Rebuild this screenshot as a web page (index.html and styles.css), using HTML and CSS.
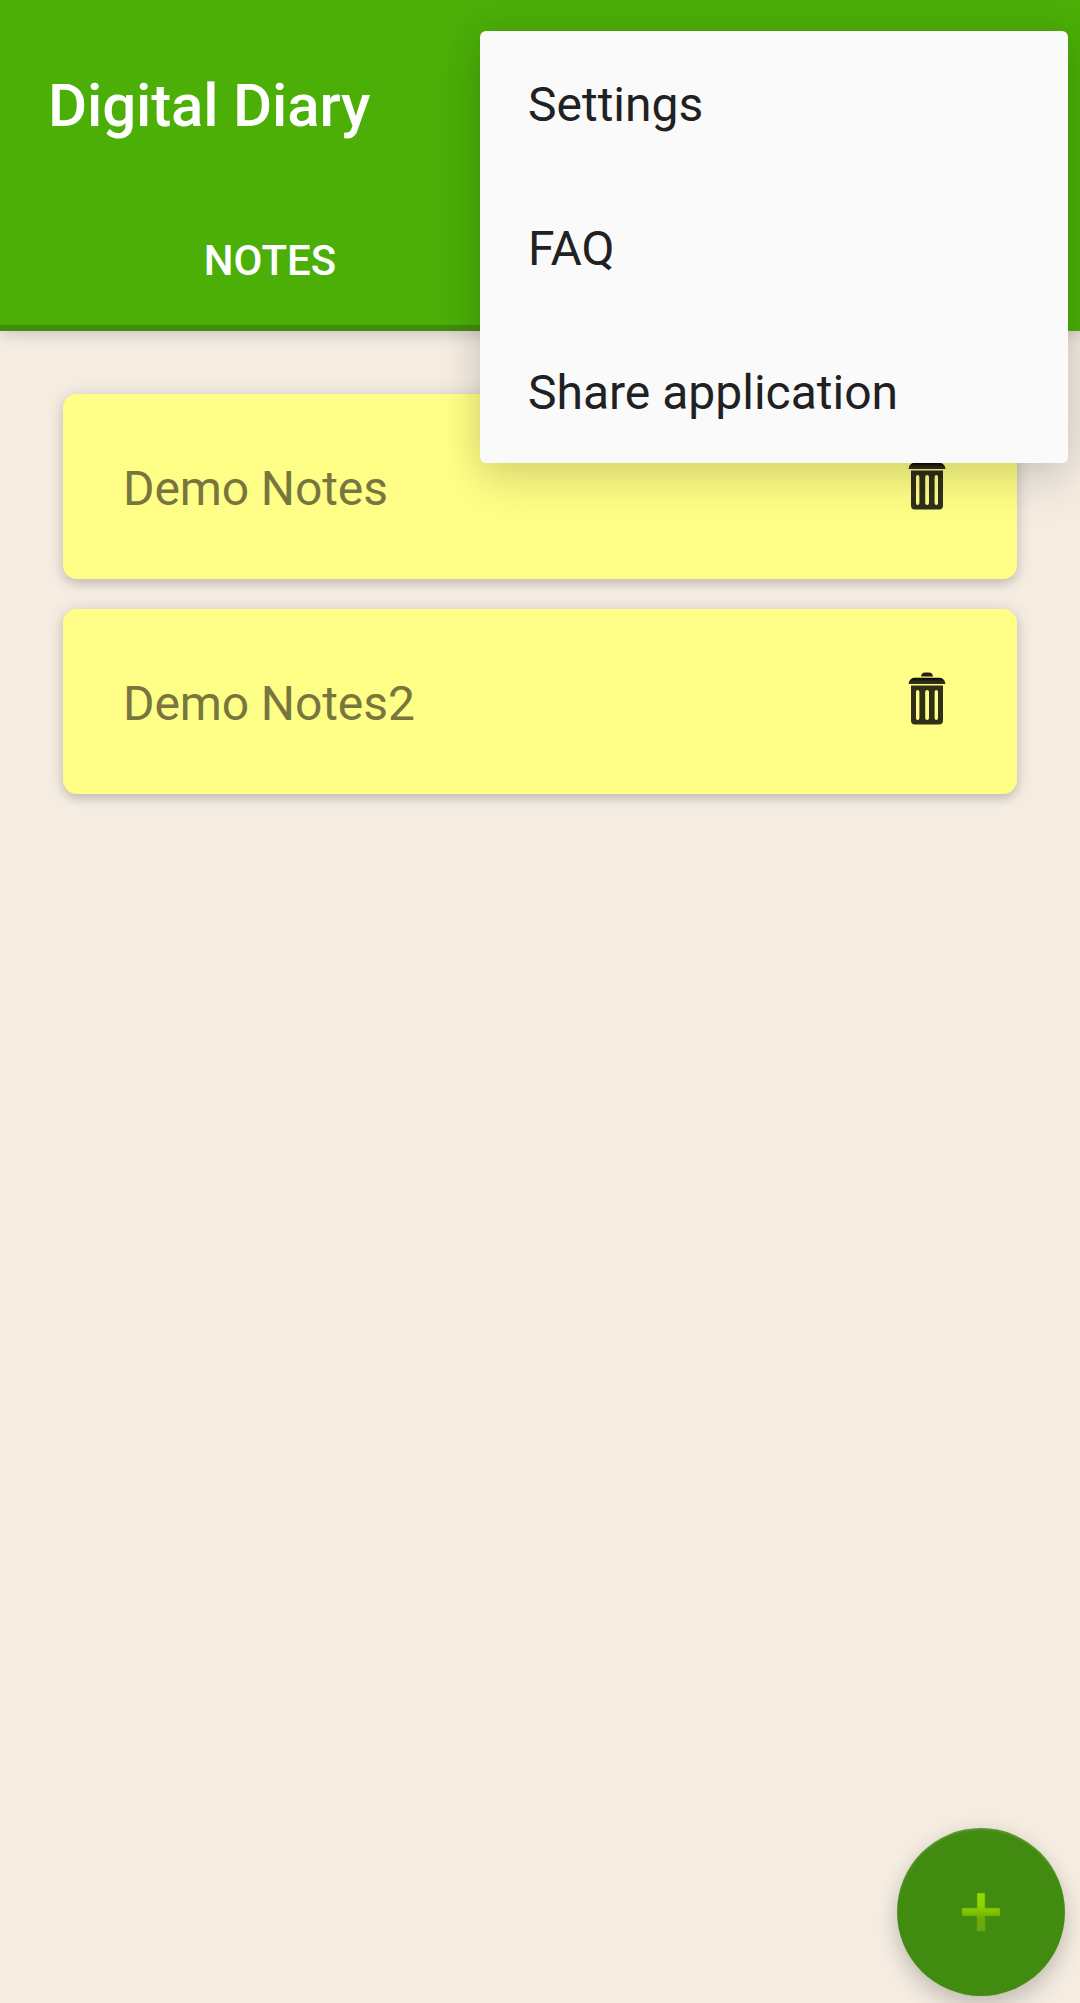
FILE: index.html
```html
<!DOCTYPE html>
<html lang="en">
<head>
    <meta charset="UTF-8">
    <meta name="viewport" content="width=device-width, initial-scale=1.0">
    <title>Digital Diary</title>
    <link rel="stylesheet" href="styles.css">
</head>
<body>
    <div id="app">
        <header>
            <h1>Digital Diary</h1>
            <nav class="tabs">
                <div class="tab active">NOTES</div>
                <div class="tab"></div>
            </nav>
        </header>

        <main class="notes">
            <div class="note">
                <span>Demo Notes</span>
                <svg class="trash" viewBox="0 0 38 54">
                    <use href="#trash-icon"/>
                </svg>
            </div>
            <div class="note">
                <span>Demo Notes2</span>
                <svg class="trash" viewBox="0 0 38 54">
                    <g id="trash-icon">
                        <path fill="#222114" d="M13 4.500q.5-4 4-4h4q3.500 0 4 4z"/>
                        <path fill="url(#lid)" d="M.5 12q.3-3.500 2.500-5 1.500-1.200 4-1.200h24q2.500 0 4 1.200 2.200 1.500 2.500 5z"/>
                        <path fill="#302f1a" fill-rule="evenodd" d="M3 13.500h32V48.500q0 4-4 4H7q-4 0-4-4zM8 20v26q0 2 1.700 2t1.700-2V20q0-2-1.700-2T8 20zm9.200 0v26q0 2 1.900 2t1.900-2V20q0-2-1.900-2t-1.900 2zm9.400 0v26q0 2 1.700 2t1.700-2V20q0-2-1.700-2t-1.700 2z"/>
                    </g>
                    <linearGradient id="lid" x1="0" y1="0" x2="0" y2="1">
                        <stop offset="0" stop-color="#080804"/>
                        <stop offset="0.700" stop-color="#302f1a"/>
                    </linearGradient>
                </svg>
            </div>
        </main>

        <button class="add" aria-label="Add note">
            <svg viewBox="0 0 40 40">
                <linearGradient id="plus" x1="0" y1="0" x2="0" y2="1">
                    <stop offset="0" stop-color="#90df00"/>
                    <stop offset="0.350" stop-color="#8ad500"/>
                    <stop offset="0.700" stop-color="#6fa900"/>
                    <stop offset="1" stop-color="#72a51c"/>
                </linearGradient>
                <path fill="url(#plus)" stroke="#5fa50b" stroke-width="0.600" d="M16 1h8v15h15v8H24v15h-8V24H1v-8h15z"/>
            </svg>
        </button>

        <ul class="menu">
            <li>Settings</li>
            <li>FAQ</li>
            <li>Share application</li>
        </ul>
    </div>
</body>
</html>
```
FILE: styles.css
```css
body {
    font-family: Roboto, sans-serif;
    margin: 0;
    padding: 0;
    background: #f5ede2;
}
#app {
    position: relative;
    height: 2003px;
    overflow: hidden;
}
header {
    display: flex;
    flex-direction: column;
    height: 331px;
    background: #4baf08;
    color: white;
    box-shadow: 0 4px 12px rgba(0, 0, 0, 0.11), 0 0 24px rgba(0, 0, 0, 0.07);
}
h1 {
    margin: 0;
    padding: 2px 48px 0;
    height: 185px;
    line-height: 207px;
    font-size: 60px;
    font-weight: 500;
    letter-spacing: -0.15px;
}
.tabs {
    display: flex;
    height: 144px;
}
.tab {
    flex: 1;
    box-sizing: border-box;
    border-bottom: 6px solid transparent;
    text-align: center;
    font-size: 42px;
    font-weight: 500;
    line-height: 147px;
}
.tab.active {
    border-bottom-color: #418b11;
}
.notes {
    display: flex;
    flex-direction: column;
    gap: 30px;
    padding: 63px;
}
.note {
    display: flex;
    justify-content: space-between;
    align-items: center;
    box-sizing: border-box;
    height: 185px;
    padding: 4px 71px 0 60px;
    border-radius: 14px;
    background: #fffe86;
    color: #77763e;
    font-size: 48px;
    letter-spacing: -0.1px;
    box-shadow: 0 5px 10px rgba(0, 0, 0, 0.13), 0 1px 18px rgba(0, 0, 0, 0.12);
}
.trash {
    width: 38px;
    height: 54px;
    margin-top: -10px;
}
.menu {
    position: absolute;
    top: 31px;
    left: 480px;
    width: 588px;
    margin: 0;
    padding: 0;
    list-style: none;
    border-radius: 6px;
    background: #fafafa;
    color: #212121;
    box-shadow: 0 22px 48px rgba(0, 0, 0, 0.11), 0 0 36px rgba(0, 0, 0, 0.1);
}
.menu li {
    box-sizing: border-box;
    height: 144px;
    padding: 2px 48px 0;
    font-size: 48px;
    line-height: 144px;
}
.add {
    position: absolute;
    right: 15px;
    bottom: 7px;
    display: flex;
    align-items: center;
    justify-content: center;
    width: 168px;
    height: 168px;
    padding: 0;
    border: none;
    border-radius: 50%;
    background: #418b11;
    box-shadow: 0 14px 22px rgba(0, 0, 0, 0.15), 0 0 20px rgba(0, 0, 0, 0.08), inset 0 2px 2px rgba(255, 255, 255, 0.13);
}
.add svg {
    width: 40px;
    height: 40px;
}
```
